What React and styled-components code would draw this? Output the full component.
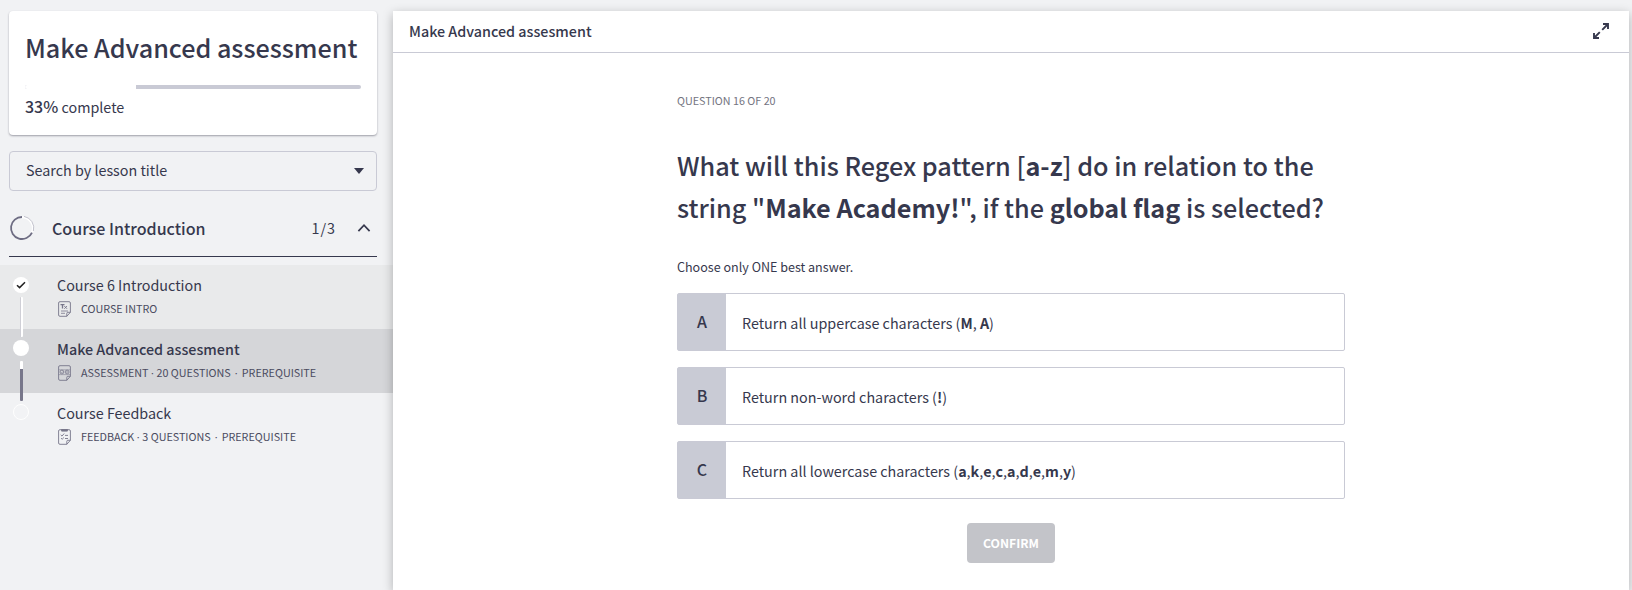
import React from "react";
import styled, { createGlobalStyle, css } from "styled-components";

const ink = "#36384d";
const line = "#c9cad5";

const GlobalStyle = createGlobalStyle`
  * { box-sizing: border-box; }
  body {
    margin: 0;
    overflow: hidden;
    background: #f1f2f4;
    color: ${ink};
    font-family: "Noto Sans CJK SC", "Noto Sans", sans-serif;
    font-size: 14.33px;
  }
  h1, h2, p { margin: 0; font-weight: 400; }
  b { font-weight: 700; }
  svg { display: block; flex: none; }
`;

const Page = styled.div`
  display: flex;
  height: 590px;
  overflow: hidden;
`;

const Sidebar = styled.aside`
  width: 393px;
  flex: none;
  padding-top: 11px;
`;

const CourseCard = styled.section`
  height: 124px;
  margin: 0 16px 0 9px;
  padding: 16px;
  background: #fff;
  border-radius: 4px;
  box-shadow: 0 1px 2px rgba(40, 40, 60, 0.42);
`;

const CourseTitle = styled.h1`
  font-size: 25.15px;
  font-weight: 500;
  line-height: 40px;
  white-space: nowrap;
`;

const ProgressTrack = styled.div`
  display: flex;
  height: 4px;
  margin-top: 18px;
  border-radius: 2px;
  overflow: hidden;
  background: ${line};
`;

const ProgressFill = styled.div`
  background: #fff;
`;

const ProgressLabel = styled.p`
  margin-top: 5px;
  line-height: 24px;
`;

const Percent = styled.span`
  font-size: 16px;
  font-weight: 500;
`;

const SearchSelect = styled.div`
  display: flex;
  align-items: center;
  justify-content: space-between;
  height: 40px;
  margin: 16px 16px 0 9px;
  padding: 0 12px 0 16px;
  border: 1px solid ${line};
  border-radius: 4px;
`;

const SearchLabel = styled.span`
  padding-bottom: 2px;
  line-height: 24px;
`;

const SectionHeader = styled.div`
  display: flex;
  align-items: center;
  height: 58px;
  margin: 8px 16px 8px 9px;
  padding-right: 6px;
  border-bottom: 1px solid ${ink};
`;

const SectionTitle = styled.h2`
  flex: 1;
  margin-left: 17px;
  font-size: 16.05px;
  font-weight: 500;
  line-height: 24px;
`;

const SectionCount = styled.span`
  margin-right: 21px;
  letter-spacing: 1px;
  line-height: 24px;
`;

const LessonRow = styled.div`
  display: flex;
  height: 64px;
  background: ${(p) => p.$bg};
`;

const Timeline = styled.div`
  position: relative;
  z-index: 1;
  display: flex;
  flex-direction: column;
  align-items: center;
  width: 16px;
  margin: 0 28px 0 13px;
  padding-top: ${(p) => (p.$done ? 12 : 11)}px;
`;

const Marker = styled.div`
  display: flex;
  align-items: center;
  justify-content: center;
  flex: none;
  width: 16px;
  height: 16px;
  border-radius: 50%;
  background: #fff;
  ${(p) =>
    p.$pending &&
    css`
      background: #f2f3f5;
      border: 1px solid #fff;
    `}
`;

const Connector = styled.div`
  flex: none;
  width: 3px;
  height: 40px;
  margin-top: ${(p) => (p.$done ? 4 : 5)}px;
  margin-left: 1px;
  border-radius: 1px;
  background: ${(p) =>
    p.$done
      ? "linear-gradient(90deg, #cfcfd6 0 1px, #fff 1px)"
      : "linear-gradient(180deg, #fff 0 8px, #77768a 8px)"};
`;

const LessonBody = styled.div`
  padding-top: 8px;
`;

const LessonTitle = styled.p`
  line-height: 24px;
  font-weight: ${(p) => (p.$active ? 500 : 400)};
`;

const LessonMeta = styled.div`
  display: flex;
  align-items: center;
  height: 16px;
  margin-top: 4px;
  color: #4a4b60;
  font-size: 10.75px;
  line-height: 16px;
  text-transform: uppercase;
  white-space: pre;
  svg { margin: 0 10px 0 1px; }
`;

const Dot = styled.span`
  font-family: "Open Sans", sans-serif;
  width: ${(p) => p.$w}px;
  text-align: center;
`;

const Player = styled.main`
  position: relative;
  z-index: 2;
  flex: 1;
  margin: 11px 3px 0 0;
  background: #fff;
  box-shadow: 0 3px 10px rgba(0, 0, 0, 0.27);
`;

const PlayerHeader = styled.header`
  display: flex;
  align-items: center;
  justify-content: space-between;
  height: 42px;
  padding: 0 20px 1px 16px;
  border-bottom: 1px solid ${line};
  font-weight: 500;
  line-height: 20px;
`;

const Quiz = styled.div`
  display: flex;
  flex-direction: column;
  width: 668px;
  margin: 40px auto 0;
`;

const QuestionCounter = styled.p`
  color: #73747f;
  font-size: 10.75px;
  line-height: 16px;
`;

const QuestionText = styled.h2`
  margin-top: 35px;
  font-size: 25.22px;
  font-weight: 500;
  line-height: 42px;
  white-space: nowrap;
`;

const Hint = styled.p`
  margin-top: 29px;
  font-size: 12.55px;
  line-height: 20px;
`;

const Options = styled.div`
  display: grid;
  gap: 16px;
  margin-top: 16px;
`;

const Option = styled.div`
  display: flex;
  height: 58px;
  border: 1px solid ${line};
  border-radius: 2px;
  line-height: 57px;
`;

const OptionKey = styled.div`
  width: 48px;
  margin-right: 16px;
  background: #c9cbd5;
  font-size: 16px;
  font-weight: 500;
  line-height: 55px;
  text-align: center;
`;

const ConfirmButton = styled.button`
  align-self: center;
  width: 88px;
  height: 40px;
  margin-top: 24px;
  padding: 0;
  border: 0;
  border-radius: 4px;
  background: #c3c4c9;
  color: #fff;
  font: 700 12.2px/40px "Noto Sans CJK SC", sans-serif;
`;

const CaretDown = () => (
  <svg width="10" height="6" viewBox="0 0 10 6">
    <path d="M0 0h10L5 6z" fill={ink} />
  </svg>
);

const ChevronUp = () => (
  <svg width="14" height="10" viewBox="0 0 14 10">
    <path d="M1.4 8.2L7 2.2l5.6 6" fill="none" stroke={ink} strokeWidth="1.7" />
  </svg>
);

const SectionRing = () => (
  <svg width="26" height="26" viewBox="0 0 26 26" fill="none">
    <path d="M13 2.2A10.8 10.8 0 0 1 22.6 18" stroke="#fff" strokeWidth="2" />
    <path d="M15 1.4A11.8 11.8 0 0 1 24.4 16" stroke="#b4b4c0" strokeWidth=".8" />
    <path d="M23 17.6A11 11 0 1 1 13 2" stroke="#6d6c82" strokeWidth="1.8" />
  </svg>
);

const Tick = () => (
  <svg width="10" height="8" viewBox="0 0 10 8">
    <path d="M1 4.2l2.6 2.4L9 1.2" fill="none" stroke="#222" strokeWidth="1.5" />
  </svg>
);

const Expand = () => (
  <svg width="16" height="16" viewBox="0 0 16 16" fill="none" stroke={ink} strokeWidth="1.9">
    <path d="M10 1h5v5M15 1L9.2 6.8M6 15H1v-5M1 15l5.8-5.8" />
  </svg>
);

const iconDetails = {
  text: (
    <>
      <path d="M2.5 3.6h4M4.5 3.6v4" strokeWidth="1.3" />
      <path d="M6.3 5l2.7 2.8M9 5L6.3 7.8" />
      <path d="M3 10h7M3 12.3h4" strokeWidth=".8" />
    </>
  ),
  assessment: (
    <>
      <path d="M.7 4.8h11.6" strokeWidth=".5" />
      <circle cx="3.9" cy="7" r="1.9" strokeWidth=".8" />
      <circle cx="9.1" cy="7" r="1.9" strokeWidth=".8" />
      <path d="M2.8 7l1 .9 1.4-1.6M8.3 6.2l1.6 1.6M9.9 6.2L8.3 7.8M.7 9.6h11.6" strokeWidth=".5" />
    </>
  ),
  feedback: (
    <>
      <path d="M3.6 .3h5.8v1.8H3.6z" fill="#77768a" />
      <path d="M2.7 5.8l1.3 1.3 2.2-2.6M3 9.2l1.2 1 1.7-1.7M7 6.4h3M7 9.5h3" />
    </>
  ),
};

const DocIcon = ({ kind }) => (
  <svg width="13" height="16" viewBox="0 0 13 16" fill="none" stroke="#77768a" strokeWidth=".9">
    <path d="M2 .7h9q1.4 0 1.4 1.3v9.3l-3.6 4H2q-1.4 0-1.4-1.3V2Q.6.7 2 .7z" />
    <path d="M8.8 15.3v-3q0-1 1-1h2.6" />
    {iconDetails[kind]}
  </svg>
);

const options = [
  ["A", <>Return all uppercase characters (<b>M</b>, <b>A</b>)</>],
  ["B", <>Return non-word characters (<b>!</b>)</>],
  [
    "C",
    <>
      Return all lowercase characters (
      {[..."akecademy"].map((ch, i) => (
        <React.Fragment key={i}>
          {i > 0 && ","}
          <b>{ch}</b>
        </React.Fragment>
      ))}
      )
    </>,
  ],
];

export default function App() {
  const progress = 33;
  return (
    <Page>
      <GlobalStyle />
      <Sidebar>
        <CourseCard>
          <CourseTitle>Make Advanced assessment</CourseTitle>
          <ProgressTrack>
            <ProgressFill style={{ width: `${progress}%` }} />
          </ProgressTrack>
          <ProgressLabel>
            <Percent>{progress}%</Percent> complete
          </ProgressLabel>
        </CourseCard>
        <SearchSelect>
          <SearchLabel>Search by lesson title</SearchLabel>
          <CaretDown />
        </SearchSelect>
        <SectionHeader>
          <SectionRing />
          <SectionTitle>Course Introduction</SectionTitle>
          <SectionCount>1/3</SectionCount>
          <ChevronUp />
        </SectionHeader>
        <LessonRow $bg="#e9eaeb">
          <Timeline $done>
            <Marker><Tick /></Marker>
            <Connector $done />
          </Timeline>
          <LessonBody>
            <LessonTitle>Course 6 Introduction</LessonTitle>
            <LessonMeta><DocIcon kind="text" />Course intro</LessonMeta>
          </LessonBody>
        </LessonRow>
        <LessonRow $bg="#d5d6d9">
          <Timeline>
            <Marker />
            <Connector />
          </Timeline>
          <LessonBody>
            <LessonTitle $active>Make Advanced assesment</LessonTitle>
            <LessonMeta>
              <DocIcon kind="assessment" />Assessment<Dot $w={8}>·</Dot>20 questions
              <Dot $w={11}>·</Dot>Prerequisite
            </LessonMeta>
          </LessonBody>
        </LessonRow>
        <LessonRow>
          <Timeline>
            <Marker $pending />
          </Timeline>
          <LessonBody>
            <LessonTitle>Course Feedback</LessonTitle>
            <LessonMeta>
              <DocIcon kind="feedback" />Feedback<Dot $w={8}>·</Dot>3 questions
              <Dot $w={11}>·</Dot>Prerequisite
            </LessonMeta>
          </LessonBody>
        </LessonRow>
      </Sidebar>
      <Player>
        <PlayerHeader>
          <span>Make Advanced assesment</span>
          <Expand />
        </PlayerHeader>
        <Quiz>
          <QuestionCounter>QUESTION 16 OF 20</QuestionCounter>
          <QuestionText>
            What will this Regex pattern [<b>a-z</b>] do in relation to the
            <br />
            string "<b>Make Academy!</b>", if the <b>global flag</b> is selected?
          </QuestionText>
          <Hint>Choose only ONE best answer.</Hint>
          <Options>
            {options.map(([key, text]) => (
              <Option key={key}>
                <OptionKey>{key}</OptionKey>
                <span>{text}</span>
              </Option>
            ))}
          </Options>
          <ConfirmButton>CONFIRM</ConfirmButton>
        </Quiz>
      </Player>
    </Page>
  );
}
